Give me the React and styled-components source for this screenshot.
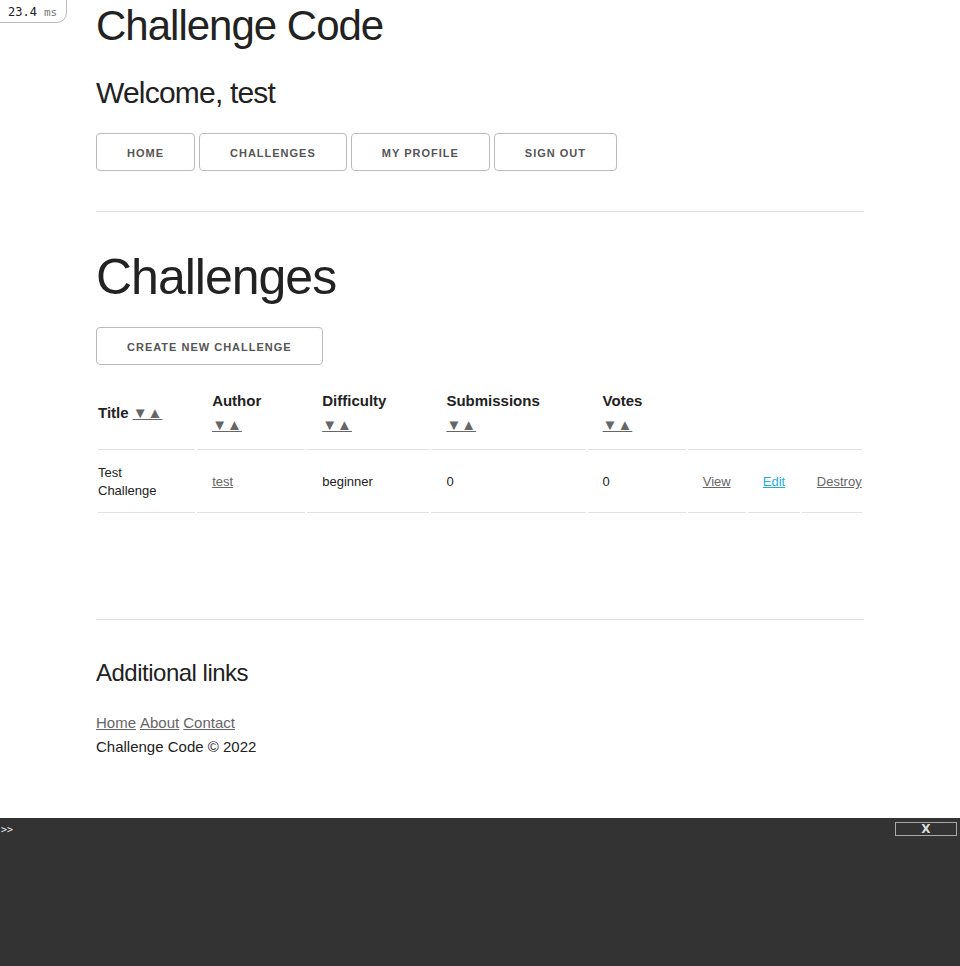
import React from 'react'
import styled, { createGlobalStyle } from 'styled-components'

const GlobalStyle = createGlobalStyle`
    html {
        font-size: 62.5%;
    }
    body {
        margin: 0;
        font-family: "Liberation Sans", Arial, sans-serif;
        font-size: 15px;
        line-height: 1.6;
        font-weight: 400;
        color: #222;
        background: #fff;
    }
`

const Container = styled.div`
    width: 768px;
    margin: 0 auto;
`

const SiteTitle = styled.h2`
    margin: 0 0 20px;
    font-size: 42px;
    line-height: 1.25;
    font-weight: 300;
    letter-spacing: -1px;
`

const Welcome = styled.h4`
    margin: 0 0 20px;
    font-size: 30px;
    line-height: 1.35;
    font-weight: 300;
    letter-spacing: -0.8px;
`

const PageTitle = styled.h1`
    margin: 0 0 20px;
    font-size: 50px;
    line-height: 1.2;
    font-weight: 300;
    letter-spacing: -1px;
`

const SubTitle = styled.h5`
    margin: 0 0 20px;
    font-size: 24px;
    line-height: 1.5;
    font-weight: 300;
    letter-spacing: -0.5px;
`

const Nav = styled.nav`
    display: flex;
    gap: 4px;
    padding-bottom: 10px;
`

const Button = styled.a`
    display: inline-block;
    box-sizing: border-box;
    height: 38px;
    padding: 0 30px;
    color: #555;
    text-align: center;
    font-size: 11px;
    font-weight: 600;
    line-height: 38px;
    letter-spacing: 1px;
    text-transform: uppercase;
    text-decoration: none;
    white-space: nowrap;
    background: transparent;
    border-radius: 4px;
    border: 1px solid #bbb;
    cursor: pointer;
`

const Rule = styled.hr`
    margin: 30px 0 35px;
    border: 0;
    border-top: 1px solid #e1e1e1;
`

const Table = styled.table`
    width: 100%;
    table-layout: fixed;
    border-collapse: separate;
    border-spacing: 2px;
    margin: 10px 0 104px;
`

const Th = styled.th`
    padding: 12px 15px;
    text-align: left;
    font-size: 15px;
    line-height: 24px;
    font-weight: 700;
    border-bottom: 1px solid #e1e1e1;
    &:first-child { padding-left: 0; }
    &:last-child { padding-right: 0; }
`

const Td = styled.td`
    padding: 12px 15px;
    text-align: left;
    font-size: 13px;
    line-height: 18px;
    border-bottom: 1px solid #e1e1e1;
    &:first-child { padding-left: 0; }
    &:last-child { padding-right: 0; }
`

const Link = styled.a`
    color: ${p => (p.$fresh ? '#1eaedb' : '#666')};
    text-decoration: underline;
    cursor: pointer;
`

const Footer = styled.footer`
    font-size: 15px;
    line-height: 24px;
`

const FootLinks = styled.div`
    display: flex;
    gap: 4px;
`

const Badge = styled.div`
    position: fixed;
    top: -1px;
    left: -1px;
    box-sizing: border-box;
    width: 68px;
    height: 24px;
    padding: 4px 0 0 8px;
    background: #fff;
    border: 1px solid #bbb;
    border-bottom-right-radius: 10px;
    font-family: "DejaVu Sans Mono", "Liberation Mono", monospace;
    font-size: 12px;
    line-height: 16px;
    color: #222;
    white-space: nowrap;
`

const Unit = styled.span`
    color: #777;
    font-size: 11px;
    margin-left: 7px;
`

const Console = styled.div`
    position: fixed;
    left: 0;
    right: 0;
    bottom: 0;
    height: 148px;
    background: #333;
    color: #fff;
    font-family: "DejaVu Sans Mono", monospace;
`

const Prompt = styled.span`
    position: absolute;
    left: 1px;
    top: 6px;
    font-size: 10px;
    line-height: 12px;
    color: #eee;
`

const CloseBtn = styled.div`
    position: absolute;
    right: 3px;
    top: 4px;
    box-sizing: border-box;
    width: 62px;
    height: 14px;
    border: 1px solid #aaa;
    text-align: center;
    font-family: "DejaVu Sans", sans-serif;
    font-size: 12px;
    font-weight: 700;
    line-height: 13px;
    color: #ddd;
`

const columns = [
    { title: 'Title', width: 97 },
    { title: 'Author', width: 108 },
    { title: 'Difficulty', width: 122 },
    { title: 'Submissions', width: 154 },
    { title: 'Votes', width: 98 },
]

const challenges = [
    { title: 'Test Challenge', author: 'test', difficulty: 'beginner', submissions: 0, votes: 0 },
]

function App() {
    return (
        <>
            <GlobalStyle />
            <Badge>23.4<Unit>ms</Unit></Badge>
            <Container>
                <header>
                    <SiteTitle>Challenge Code</SiteTitle>
                    <Welcome>Welcome, test</Welcome>
                    <Nav>
                        <Button>Home</Button>
                        <Button>Challenges</Button>
                        <Button>My Profile</Button>
                        <Button>Sign out</Button>
                    </Nav>
                </header>
                <Rule />
                <PageTitle>Challenges</PageTitle>
                <Button>Create new challenge</Button>
                <Table>
                    <colgroup>
                        {columns.map(c => <col key={c.title} style={{ width: c.width }} />)}
                        <col style={{ width: 58 }} />
                        <col style={{ width: 52 }} />
                        <col style={{ width: 60 }} />
                    </colgroup>
                    <thead>
                        <tr>
                            {columns.map(c => (
                                <Th key={c.title}>{c.title} <Link>▼▲</Link></Th>
                            ))}
                            <Th colSpan={3}></Th>
                        </tr>
                    </thead>
                    <tbody>
                        {challenges.map(ch => (
                            <tr key={ch.title}>
                                <Td>{ch.title}</Td>
                                <Td><Link>{ch.author}</Link></Td>
                                <Td>{ch.difficulty}</Td>
                                <Td>{ch.submissions}</Td>
                                <Td>{ch.votes}</Td>
                                <Td><Link>View</Link></Td>
                                <Td><Link $fresh>Edit</Link></Td>
                                <Td><Link>Destroy</Link></Td>
                            </tr>
                        ))}
                    </tbody>
                </Table>
                <Rule />
                <Footer>
                    <SubTitle>Additional links</SubTitle>
                    <FootLinks>
                        <Link>Home</Link>
                        <Link>About</Link>
                        <Link>Contact</Link>
                    </FootLinks>
                    <div>Challenge Code © 2022</div>
                </Footer>
            </Container>
            <Console>
                <Prompt>&gt;&gt;</Prompt>
                <CloseBtn>X</CloseBtn>
            </Console>
        </>
    )
}

export default App
